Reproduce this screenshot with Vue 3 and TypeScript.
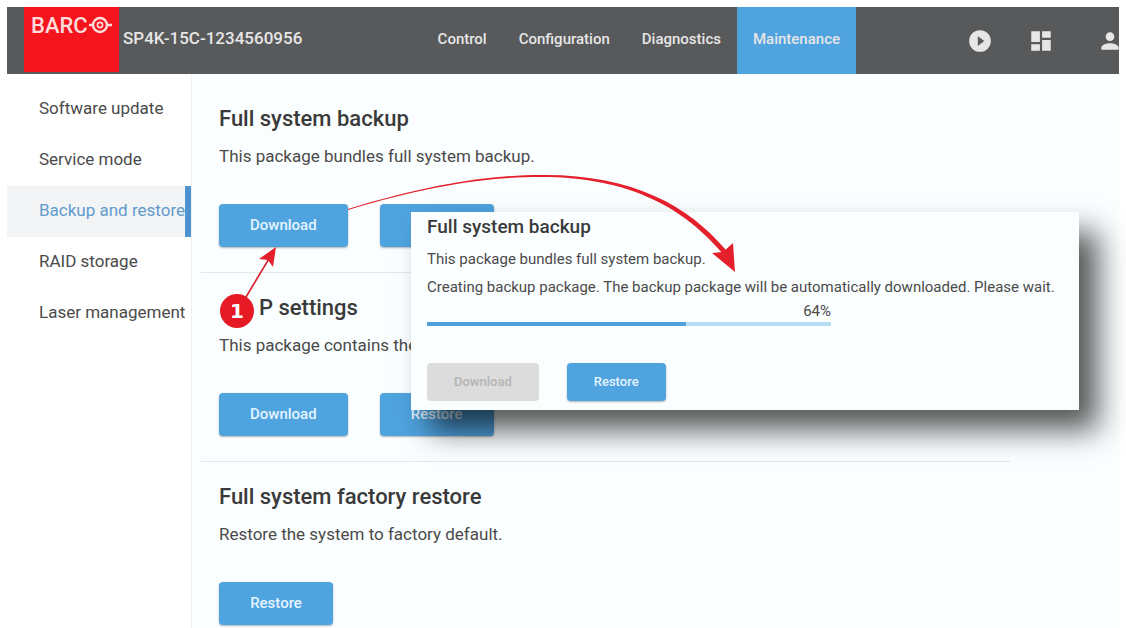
<script setup lang="ts">
import { ref } from 'vue'

interface Action {
  name: string
  blank?: boolean
}

interface Package {
  id: string
  title: string
  text: string
  actions: Action[]
  numbered?: boolean
}

const tabs: string[] = ['Control', 'Configuration', 'Diagnostics', 'Maintenance']
const activeTab = ref('Maintenance')

const pages: string[] = [
  'Software update',
  'Service mode',
  'Backup and restore',
  'RAID storage',
  'Laser management',
]
const activePage = ref('Backup and restore')

const packages: Package[] = [
  {
    id: 'backup',
    title: 'Full system backup',
    text: 'This package bundles full system backup.',
    actions: [{ name: 'Download' }, { name: 'Restore', blank: true }],
  },
  {
    id: 'settings',
    title: 'P settings',
    text: 'This package contains the',
    actions: [{ name: 'Download' }, { name: 'Restore' }],
    numbered: true,
  },
  {
    id: 'factory',
    title: 'Full system factory restore',
    text: 'Restore the system to factory default.',
    actions: [{ name: 'Restore' }],
  },
]

const progress = ref(64)
</script>

<template>
  <div class="page">
    <header class="topbar">
      <a class="logo" href="#" aria-label="Barco home">
        <span>BARC</span>
        <svg width="24" height="18" viewBox="0 0 24 18" aria-hidden="true">
          <circle cx="12" cy="9" r="7" fill="none" stroke="currentColor" stroke-width="2.4" />
          <circle cx="12" cy="9" r="2.600" fill="none" stroke="currentColor" stroke-width="1.6" />
          <path d="M1 9h4M19 9h5" stroke="currentColor" stroke-width="2.4" />
        </svg>
      </a>
      <span class="device">SP4K-15C-1234560956</span>
      <nav class="tabs" aria-label="Main">
        <a
          v-for="tab in tabs"
          :key="tab"
          href="#"
          :class="{ active: tab === activeTab }"
          @click.prevent="activeTab = tab"
          >{{ tab }}</a
        >
      </nav>
      <div class="tools">
        <button type="button" aria-label="Play">
          <svg width="26" height="26" viewBox="0 0 24 24" aria-hidden="true">
            <path d="M12 2a10 10 0 1 0 0 20 10 10 0 0 0 0-20zM10 16.5v-9l6 4.500z" />
          </svg>
        </button>
        <button type="button" aria-label="Dashboard">
          <svg width="26" height="26" viewBox="0 0 24 24" aria-hidden="true">
            <path d="M3 13h8V3H3zM3 21h8v-6H3zM13 21h8V11h-8zM13 3v6h8V3z" />
          </svg>
        </button>
        <button type="button" class="account" aria-label="Account">
          <svg width="26" height="26" viewBox="0 0 24 24" aria-hidden="true">
            <path
              d="M12 12c2.200 0 4-1.800 4-4s-1.800-4-4-4-4 1.800-4 4 1.800 4 4 4zm0 2c-2.700 0-8 1.300-8 4v2h16v-2c0-2.700-5.300-4-8-4z"
            />
          </svg>
        </button>
      </div>
    </header>

    <div class="body">
      <nav class="side" aria-label="Maintenance">
        <a
          v-for="page in pages"
          :key="page"
          href="#"
          :class="{ active: page === activePage }"
          @click.prevent="activePage = page"
          >{{ page }}</a
        >
      </nav>

      <main class="content">
        <section v-for="pkg in packages" :key="pkg.id" class="package">
          <h2 :class="{ numbered: pkg.numbered }">{{ pkg.title }}</h2>
          <p>{{ pkg.text }}</p>
          <div class="actions">
            <button
              v-for="action in pkg.actions"
              :key="action.name"
              type="button"
              class="btn"
              :aria-label="action.name"
            >
              <template v-if="!action.blank">{{ action.name }}</template>
            </button>
          </div>
        </section>
      </main>
    </div>

    <div class="dialog" role="dialog" aria-labelledby="dialog-title">
      <h3 id="dialog-title">Full system backup</h3>
      <p>This package bundles full system backup.</p>
      <p>Creating backup package. The backup package will be automatically downloaded. Please wait.</p>
      <div class="progress">
        <span class="percent">{{ progress }}%</span>
        <div
          class="track"
          role="progressbar"
          aria-label="Backup progress"
          :aria-valuenow="progress"
          aria-valuemin="0"
          aria-valuemax="100"
        >
          <div class="fill" :style="{ width: progress + '%' }"></div>
        </div>
      </div>
      <div class="actions">
        <button type="button" class="btn" disabled>Download</button>
        <button type="button" class="btn">Restore</button>
      </div>
    </div>

    <svg class="arrows" width="760" height="340" viewBox="0 0 760 340" aria-hidden="true">
      <path
        d="M348 209C430 184 490 175 541 175C631 174 688 205 726 250L723 254C685 209 631 177 541 177C490 177 430 185 348 210Z"
      />
      <path d="M735 272L712 253L723 252L733 243Z" />
      <path d="M246 297L270 257" fill="none" stroke="#d8232f" stroke-width="1.6" />
      <path d="M276 247L259 259L268 260L273 267Z" />
    </svg>
    <span class="badge">1</span>
  </div>
</template>

<style>
body {
  margin: 0;
  background: #fff;
}
</style>

<style scoped>
.page {
  position: relative;
  box-sizing: border-box;
  display: flex;
  flex-direction: column;
  min-height: 100vh;
  padding: 7px 7px 0;
  overflow: hidden;
  font-family: Roboto, 'Liberation Sans', sans-serif;
  color: #4a4a4a;
}

a {
  color: inherit;
  text-decoration: none;
}

h2,
h3,
p {
  margin: 0;
}

button {
  font: inherit;
  border: 0;
  cursor: pointer;
}

.topbar {
  display: flex;
  height: 67px;
  padding-left: 17px;
  background: #58595b;
  color: #e6e6e6;
  overflow: hidden;
}

.logo {
  display: flex;
  align-items: flex-start;
  box-sizing: border-box;
  width: 95px;
  height: 65px;
  padding: 9px 0 0 7px;
  background: #f3141d;
  color: #ffdcdc;
  font-size: 22px;
  line-height: 20px;
  font-weight: 500;
}

.device {
  padding-left: 4px;
  font-size: 17px;
  line-height: 62px;
  font-weight: 500;
}

.tabs {
  display: flex;
  margin-left: auto;
  font-size: 15px;
  line-height: 65px;
  font-weight: 500;
}

.tabs a {
  padding: 0 16px;
}

.tabs .active {
  background: #4fa3df;
}

.tools {
  display: flex;
  align-items: center;
  gap: 35px;
  flex: none;
  box-sizing: border-box;
  width: 263px;
  padding-left: 111px;
}

.tools button {
  display: flex;
  flex: none;
  padding: 0;
  background: none;
  color: inherit;
}

.tools .account {
  margin-left: 8px;
}

.tools svg {
  fill: currentColor;
}

.body {
  display: flex;
  flex: 1;
}

.side {
  display: flex;
  flex-direction: column;
  flex: none;
  box-sizing: border-box;
  width: 185px;
  padding-top: 10px;
  border-right: 1px solid #eef0f1;
  font-size: 17px;
  line-height: 49px;
}

.side a {
  height: 51px;
  padding-left: 32px;
  white-space: nowrap;
}

.side .active {
  background: #f3f4f5;
  border-right: 6px solid #4d94cf;
  color: #5f9bcd;
}

.content {
  flex: 1;
  padding: 10px 109px 0 9px;
  background: #fbfeff;
}

.package {
  padding: 22px 0 25px 18px;
  border-bottom: 1px solid #e2e7ea;
}

.package:last-child {
  padding-bottom: 4px;
  border-bottom: 0;
}

.package h2 {
  font-size: 22px;
  line-height: 26px;
  font-weight: 500;
  color: #3a3a3a;
}

.package h2.numbered {
  padding-left: 40px;
}

.package p {
  margin-top: 12px;
  font-size: 17px;
  line-height: 24px;
}

.actions {
  display: flex;
  gap: 32px;
}

.package .actions {
  margin-top: 36px;
}

.btn {
  min-width: 114px;
  height: 43px;
  padding: 0 31px 2px;
  border-radius: 4px;
  background: #4fa3df;
  box-shadow: 0 1px 2px rgba(0, 0, 0, 0.3);
  color: #e4f4ff;
  font-size: 15px;
  font-weight: 500;
}

.dialog {
  position: absolute;
  left: 411px;
  top: 212px;
  box-sizing: border-box;
  width: 668px;
  padding: 3px 16px 9px;
  background: #fbfeff;
  box-shadow: 19px 20px 28px rgba(0, 0, 0, 0.66);
}

.dialog h3 {
  margin-bottom: 6px;
  font-size: 19px;
  line-height: 24px;
  font-weight: 500;
  color: #3a3a3a;
}

.dialog p {
  font-size: 15px;
  line-height: 28px;
  white-space: nowrap;
}

.progress {
  width: 404px;
  text-align: right;
}

.percent {
  display: block;
  font-size: 15px;
  line-height: 21px;
}

.track {
  height: 4px;
  background: #b9dcf5;
}

.fill {
  height: 4px;
  background: #4fa0db;
}

.dialog .actions {
  gap: 28px;
  margin-top: 37px;
}

.dialog .btn {
  min-width: 0;
  height: 38px;
  padding: 0 27px 1px;
  font-size: 13px;
}

.dialog .btn:disabled {
  background: #dcdcdc;
  box-shadow: none;
  color: #b4b4b4;
  cursor: default;
}

.arrows {
  position: absolute;
  left: 0;
  top: 0;
  fill: #e3202c;
  pointer-events: none;
}

.badge {
  position: absolute;
  left: 220px;
  top: 294px;
  width: 34px;
  height: 34px;
  border-radius: 50%;
  background: #e51a24;
  color: #fff;
  font-family: 'DejaVu Sans', sans-serif;
  font-size: 20px;
  line-height: 34px;
  font-weight: 700;
  text-align: center;
}
</style>
